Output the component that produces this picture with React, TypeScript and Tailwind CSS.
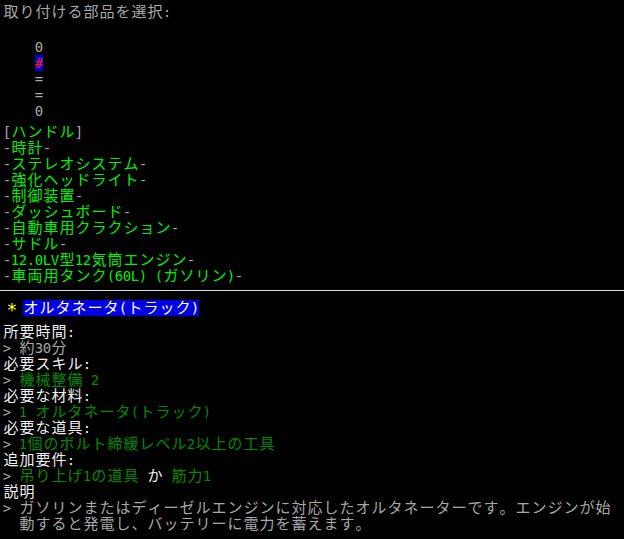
import React from "react";

type Seg = { t: string; c: string; bg?: string };

const GRAY = "text-[#a8a8a8]";
const GREEN = "text-[#00f000]";
const DARK = "text-[#008c00]";
const WHITE = "text-[#f0f0f0]";

const isWide = (ch: string) => ch.charCodeAt(0) > 0x7f;

// one terminal cell per character: half-width 8px, full-width 16px
const Cells = ({ seg }: { seg: Seg }) => (
  <span className={`flex h-4 items-center ${seg.bg ?? ""}`}>
    {Array.from(seg.t).map((ch, i) => (
      <span
        key={i}
        className={`flex justify-center overflow-hidden leading-4 ${
          isWide(ch) ? "w-4 text-[15px]" : "w-2 text-[14px]"
        } ${seg.c}`}
      >
        {ch === " " ? "\u00a0" : ch}
      </span>
    ))}
  </span>
);

const Line = ({ segs, className = "" }: { segs: Seg[]; className?: string }) => (
  <div className={`flex h-4 items-center ${className}`}>
    {segs.map((s, i) => (
      <Cells key={i} seg={s} />
    ))}
  </div>
);

const parts = [
  "時計",
  "ステレオシステム",
  "強化ヘッドライト",
  "制御装置",
  "ダッシュボード",
  "自動車用クラクション",
  "サドル",
  "12.0LV型12気筒エンジン",
  "車両用タンク(60L) (ガソリン)",
];

const symbols: Seg[] = [
  { t: "0", c: GRAY },
  { t: "#", c: "text-[#ff1010]", bg: "bg-[#0000e8]" },
  { t: "=", c: GRAY },
  { t: "=", c: GRAY },
  { t: "0", c: GRAY },
];

const prompt: Seg = { t: "> ", c: GRAY };

const details: Seg[][] = [
  [{ t: "所要時間:", c: WHITE }],
  [prompt, { t: "約30分", c: GRAY }],
  [{ t: "必要スキル:", c: WHITE }],
  [prompt, { t: "機械整備 2", c: DARK }],
  [{ t: "必要な材料:", c: WHITE }],
  [prompt, { t: "1 オルタネータ(トラック)", c: DARK }],
  [{ t: "必要な道具:", c: WHITE }],
  [prompt, { t: "1個のボルト締緩レベル2以上の工具", c: DARK }],
  [{ t: "追加要件:", c: WHITE }],
  [
    prompt,
    { t: "吊り上げ1の道具", c: DARK },
    { t: " か ", c: WHITE },
    { t: "筋力1", c: DARK },
  ],
  [{ t: "説明", c: WHITE }],
  [
    prompt,
    {
      t: "ガソリンまたはディーゼルエンジンに対応したオルタネーターです。エンジンが始",
      c: GRAY,
    },
  ],
  [{ t: "  動すると発電し、バッテリーに電力を蓄えます。", c: GRAY }],
];

export default function App() {
  return (
    <div
      className="h-[539px] w-[624px] overflow-hidden bg-black"
      style={{ fontFamily: '"DejaVu Sans Mono", "Noto Sans CJK JP", monospace' }}
    >
      <div className="pl-[3px] pt-1">
        <Line segs={[{ t: "取り付ける部品を選択:", c: GRAY }]} />

        <div className="mt-[19px] flex flex-col pl-8">
          {symbols.map((s, i) => (
            <Line key={i} segs={[s]} />
          ))}
        </div>

        <div className="mt-[5px] flex flex-col">
          <Line
            segs={[
              { t: "[", c: GRAY },
              { t: "ハンドル", c: GREEN },
              { t: "]", c: GRAY },
            ]}
          />
          {parts.map((p) => (
            <Line
              key={p}
              segs={[
                { t: "-", c: GRAY },
                { t: p, c: GREEN },
                { t: "-", c: GRAY },
              ]}
            />
          ))}
        </div>
      </div>

      <div className="mt-[6px] h-px w-full bg-[#e0e0e0]" />

      <div className="pl-[3px]">
        <div className="mt-[9px] flex h-4 items-center">
          <span className="ml-[5px] flex h-4 w-2 items-center justify-center pt-[3px] text-[18px] leading-4 text-[#ffff20]">
            *
          </span>
          <div className="ml-[7px]">
            <Line segs={[{ t: "オルタネータ(トラック)", c: "text-white", bg: "bg-[#0000e0]" }]} />
          </div>
        </div>

        <div className="mt-2 flex flex-col">
          {details.map((segs, i) => (
            <Line key={i} segs={segs} />
          ))}
        </div>
      </div>
    </div>
  );
}
